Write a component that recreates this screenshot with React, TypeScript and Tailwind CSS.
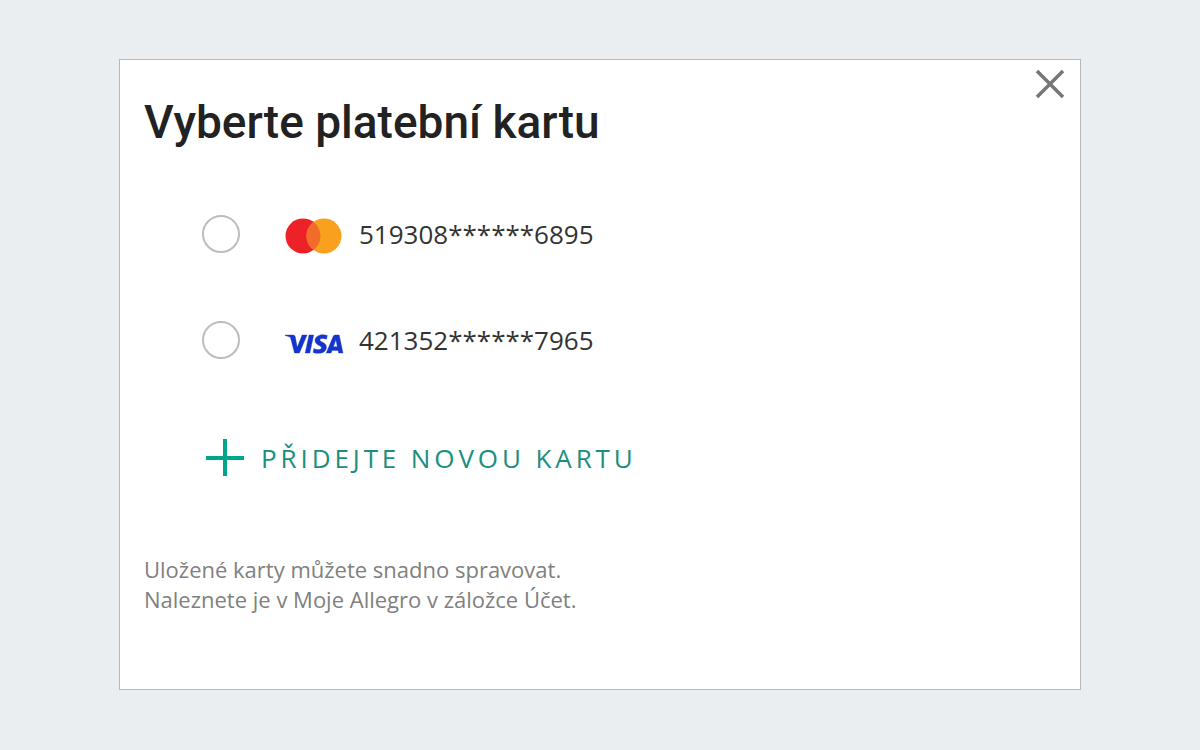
import { SiVisa } from "react-icons/si";

const MastercardLogo = () => (
    <svg width="58" height="36" viewBox="0 0 58 36" aria-label="Mastercard">
        <circle cx="18" cy="18" r="17.5" fill="#ec2228" />
        <circle cx="39" cy="18" r="17.5" fill="#f9a01f" />
        <path d="M28.5 4a17.5 17.5 0 0 1 0 28a17.5 17.5 0 0 1 0-28z" fill="#f26b2a" />
    </svg>
);

const VisaLogo = () => (
    <SiVisa size={58} color="#1434cb" stroke="#1434cb" strokeWidth="0.15" className="mt-1 overflow-visible" aria-label="Visa" />
);

const cards = [
    { id: "mastercard", number: "519308******6895", logo: <MastercardLogo /> },
    { id: "visa", number: "421352******7965", logo: <VisaLogo /> },
];

const CardOption = ({ id, number, logo }: {
    id: string;
    number: string;
    logo: React.ReactNode;
}) => {
    return <div className="flex h-9 items-center">
        <input
            type="radio"
            name="card"
            id={id}
            className="size-[38px] shrink-0 appearance-none rounded-full border-2 border-[#bdbdbd] bg-white checked:border-[#00a790] checked:border-8"
        />
        <label htmlFor={id} className="ml-[45px] flex items-center gap-4 text-[26px] leading-9 text-[#333333]">
            <span className="flex h-9 w-[58px] items-center justify-center pt-1">{logo}</span>
            {number}
        </label>
    </div>
}

export default function App() {
    return <div className="min-h-screen bg-[#eaeef1] px-[119px] py-[59px] font-['Open_Sans',sans-serif]">
        <main className="relative border border-[#b8b9ba] bg-white px-6 pt-8 pb-[75px]">
            <button type="button" aria-label="Zavřít" className="absolute top-2 right-[14px] cursor-pointer text-[#767676]">
                <svg width="32" height="32" viewBox="0 0 32 32" fill="none" stroke="currentColor" strokeWidth="3.5">
                    <path d="M3 3l26 26M29 3L3 29" />
                </svg>
            </button>

            <h1 className="font-['Roboto',sans-serif] text-[46px] leading-[60px] font-medium text-[#222222]">
                Vyberte platební kartu
            </h1>

            <form className="mt-16 ml-[58px] flex flex-col gap-[70px]">
                {cards.map((card) => <CardOption key={card.id} {...card} />)}
            </form>

            <button type="button" className="mt-20 ml-[62px] flex cursor-pointer items-center gap-[17px] text-[26px] leading-10 tracking-[0.15em] text-[#1a8f80] uppercase">
                <svg width="38" height="38" viewBox="0 0 38 38" fill="none" stroke="#00a58e" strokeWidth="4">
                    <path d="M19 0v37M0 19h38" />
                </svg>
                Přidejte novou kartu
            </button>

            <p className="mt-[76px] text-[22px] leading-[30px] text-[#808080]">
                Uložené karty můžete snadno spravovat.<br />
                Naleznete je v Moje Allegro v záložce Účet.
            </p>
        </main>
    </div>
}
